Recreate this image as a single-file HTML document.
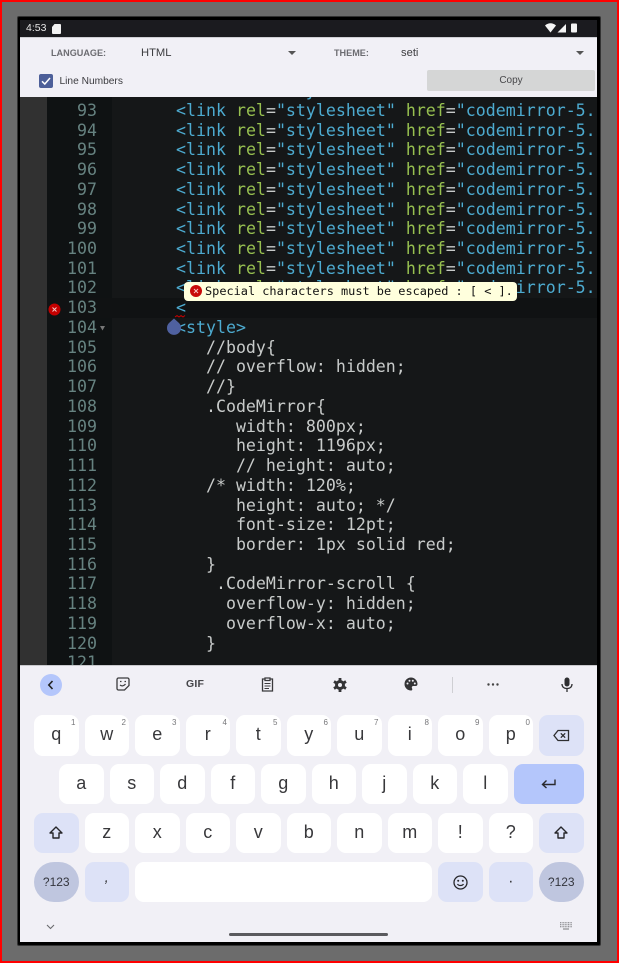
<!DOCTYPE html>
<html><head><meta charset="utf-8"><style>
*{margin:0;padding:0;box-sizing:border-box}
html,body{width:619px;height:963px;overflow:hidden;background:#6c6c6c;font-family:"Liberation Sans",sans-serif}
.a{position:absolute}
#red{left:0;top:0;width:619px;height:963px;border:2px solid #f00;z-index:9;pointer-events:none}
#dev{left:17px;top:16px;width:584px;height:930px;background:#000;border-radius:2px;border:1px solid #333}
#scr{left:20px;top:20px;width:577px;height:922px;background:#f1f0f6;overflow:hidden}
#st{left:0;top:0;width:577px;height:17px;background:#1b1b1f}
#tb{left:0;top:17px;width:577px;height:60px;background:#f1f0f6;border-top:1px solid #cfcfd4}
.g{color:#6c6c71;font-size:9.1px;font-weight:bold}
.v{color:#3c3c3f;font-size:11.2px}
#ed{left:0;top:77px;width:577px;height:568px;background:#151718;overflow:hidden}
#gl{left:0;top:0;width:27px;height:568px;background:#313131}
#gn{left:27px;top:0;width:65px;height:568px;background:#0f1213}
#al{left:27px;top:201px;width:550px;height:20px;background:#101213}
#c{left:156px;top:-15.9px;font:16.6px/19.74px "DejaVu Sans Mono",monospace;color:#c8cbca;white-space:pre}
#n{left:27px;top:-15.9px;width:50px;text-align:right;font:16.6px/19.74px "DejaVu Sans Mono",monospace;color:#668280;white-space:pre}
i{font-style:normal;color:#4dabd0}b{font-weight:normal;color:#97c050}
#tip{left:164px;top:185px;width:333px;height:19px;background:#ffd;border-radius:4px;font:11.9px/18px "DejaVu Sans Mono",monospace;color:#111;padding-left:21px;white-space:pre}
#kb{left:0;top:645px;width:577px;height:277px;background:#f1f0f6;border-top:1px solid #c9c9cd}
.k{position:absolute;background:#fff;border-radius:9px;width:44.5px;height:40.5px;text-align:center;font-size:18px;line-height:39px;color:#38383b}
.d{background:#dde2f7}
.p{background:#bfc6df;border-radius:20px;font-size:12px;line-height:40px;color:#33353d}
.k u{position:absolute;right:3px;top:3px;font-size:8px;line-height:9px;color:#77777a;text-decoration:none}
svg{position:absolute;overflow:visible}
</style></head><body>
<div class="a" id="dev"></div>
<div class="a" id="scr">
<div class="a" id="st">
<span class="a" style="left:6px;top:2px;font-size:10.5px;line-height:13px;color:#e6e6e6">4:53</span>
<svg style="left:32px;top:3.500px" width="9" height="10" viewBox="0 0 9 10"><path d="M2.500 0H8a1 1 0 0 1 1 1v8a1 1 0 0 1-1 1H1a1 1 0 0 1-1-1V3z" fill="#f2f2f2"/></svg>
<svg style="left:525px;top:3px" width="50" height="11" viewBox="0 0 50 11"><path d="M0 2.500C3-.5 8-.5 11 2.500L5.500 9.500z" fill="#f5f5f5"/><path d="M21 1V9.500H12.500z" fill="#f5f5f5"/><rect x="26" y="0.500" width="6" height="9" rx="1" fill="#f5f5f5"/></svg>
</div>
<div class="a" id="tb">
<span class="a g" style="left:31px;top:8.500px;line-height:12px">LANGUAGE:</span>
<span class="a v" style="left:121px;top:9px;line-height:13px">HTML</span>
<svg style="left:268px;top:12.500px" width="8" height="4"><path d="M0 0H8L4 4z" fill="#555"/></svg>
<span class="a g" style="left:314px;top:8.500px;line-height:12px">THEME:</span>
<span class="a v" style="left:381px;top:9px;line-height:13px">seti</span>
<svg style="left:556px;top:12.500px" width="8" height="4"><path d="M0 0H8L4 4z" fill="#555"/></svg>
<div class="a" style="left:19px;top:36px;width:14px;height:14px;border-radius:2px;background:#4d5f99"></div>
<svg style="left:19px;top:36px" width="14" height="14"><path d="M3 7.300L5.800 10 11 4" fill="none" stroke="#fff" stroke-width="1.500"/></svg>
<span class="a" style="left:39.500px;top:36.500px;font-size:10.200px;line-height:13px;color:#3c3c40">Line Numbers</span>
<div class="a" style="left:407px;top:32px;width:168px;height:21px;background:#d5d6d6;border-radius:2px;text-align:center;font-size:10px;line-height:21px;color:#48484b">Copy</div>
</div>
<div class="a" id="ed">
<div class="a" id="gl"></div><div class="a" id="gn"></div><div class="a" id="al"></div>
<div class="a" id="n">92
93
94
95
96
97
98
99
100
101
102
103
104
105
106
107
108
109
110
111
112
113
114
115
116
117
118
119
120
121</div>
<div class="a" id="c"><i>&lt;link</i> <b>rel</b>=<i>"stylesheet"</i> <b>href</b>=<i>"codemirror-5.</i>
<i>&lt;link</i> <b>rel</b>=<i>"stylesheet"</i> <b>href</b>=<i>"codemirror-5.</i>
<i>&lt;link</i> <b>rel</b>=<i>"stylesheet"</i> <b>href</b>=<i>"codemirror-5.</i>
<i>&lt;link</i> <b>rel</b>=<i>"stylesheet"</i> <b>href</b>=<i>"codemirror-5.</i>
<i>&lt;link</i> <b>rel</b>=<i>"stylesheet"</i> <b>href</b>=<i>"codemirror-5.</i>
<i>&lt;link</i> <b>rel</b>=<i>"stylesheet"</i> <b>href</b>=<i>"codemirror-5.</i>
<i>&lt;link</i> <b>rel</b>=<i>"stylesheet"</i> <b>href</b>=<i>"codemirror-5.</i>
<i>&lt;link</i> <b>rel</b>=<i>"stylesheet"</i> <b>href</b>=<i>"codemirror-5.</i>
<i>&lt;link</i> <b>rel</b>=<i>"stylesheet"</i> <b>href</b>=<i>"codemirror-5.</i>
<i>&lt;link</i> <b>rel</b>=<i>"stylesheet"</i> <b>href</b>=<i>"codemirror-5.</i>
<i>&lt;link</i> <b>rel</b>=<i>"stylesheet"</i> <b>href</b>=<i>"codemirror-5.</i>
<i>&lt;</i>
<i>&lt;style&gt;</i>
   //body{
   // overflow: hidden;
   //}
   .CodeMirror{
      width: 800px;
      height: 1196px;
      // height: auto;
   /* width: 120%;
      height: auto; */
      font-size: 12pt;
      border: 1px solid red;
   }
    .CodeMirror-scroll {
     overflow-y: hidden;
     overflow-x: auto;
   }
</div>
<svg style="left:155px;top:218px" width="11" height="3"><path d="M0 2L2 .5 4 2 6 .5 8 2 10 .5" fill="none" stroke="#c00" stroke-width=".9"/></svg>
<svg style="left:28px;top:206px" width="13" height="13"><circle cx="6.500" cy="6.500" r="6" fill="#c40000"/><path d="M4.500 4.500L8.500 8.500M8.500 4.500L4.500 8.500" stroke="#f3c6c6" stroke-width="1"/></svg>
<svg style="left:80px;top:229px" width="6" height="5"><path d="M0 0H5L2.500 4.500z" fill="#777"/></svg>
<svg style="left:146px;top:221px" width="16" height="17"><path d="M8 0.500L13 5A7 7 0 1 1 3 5z" fill="#4f61a0"/></svg>
<div class="a" id="tip">Special characters must be escaped : [ &lt; ].
<svg style="left:6px;top:3px" width="12" height="12"><circle cx="6" cy="6" r="6" fill="#c80a0a"/><path d="M4 4L8 8M8 4L4 8" stroke="#f5c4c4" stroke-width="1"/></svg></div>
</div>
<div class="a" id="kb">
<div class="a" style="left:20px;top:8px;width:22px;height:22px;border-radius:11px;background:#b4c6fb"></div>
<svg style="left:27px;top:14px" width="8" height="10"><path d="M5.500 1L1.800 5 5.500 9" fill="none" stroke="#222" stroke-width="1.600"/></svg>
<svg style="left:96px;top:11px" width="14" height="14" viewBox="0 0 14 14"><path d="M2.500 1H11.500A1.500 1.500 0 0 1 13 2.500V8.500L8.500 13H2.500A1.500 1.500 0 0 1 1 11.500V2.500A1.500 1.500 0 0 1 2.500 1z" fill="none" stroke="#3a3a3c" stroke-width="1.300"/><path d="M4 4.500H5.500M8.500 4.500H10M4 8C6 9.500 8 9 9.500 7" fill="none" stroke="#3a3a3c" stroke-width="1.200"/></svg>
<span class="a" style="left:166px;top:12px;font-size:10.500px;line-height:13px;font-weight:bold;color:#46464a;letter-spacing:.2px">GIF</span>
<svg style="left:241px;top:11px" width="13" height="15" viewBox="0 0 13 15"><path d="M4 2H1.500V14H11.500V2H9M4 1H9V3.500H4z" fill="none" stroke="#3a3a3c" stroke-width="1.300"/><path d="M3.500 6.500H9.500M3.500 9H9.500M3.500 11.500H8" stroke="#3a3a3c" stroke-width="1.100"/></svg>
<svg style="left:313px;top:12px" width="14" height="14" viewBox="0 0 14 14"><circle cx="7" cy="7" r="3.500" fill="none" stroke="#343436" stroke-width="3"/><path d="M7 0V3M7 11V14M1 3.500L3.500 5M10.500 9L13 10.500M1 10.500L3.500 9M10.500 5L13 3.500" stroke="#343436" stroke-width="2.800"/></svg>
<svg style="left:384px;top:11px" width="14" height="14" viewBox="0 0 14 14"><path d="M7 0.500A6.500 6.500 0 1 0 7 13.500C8.500 13.500 8.500 12 8 11.200 7.400 10 8.200 9 9.500 9H11.500C13 9 13.500 8 13.500 7 13.500 3.500 10.500 .5 7 .5z" fill="#343436"/><circle cx="3.500" cy="6.500" r="1" fill="#f1f0f6"/><circle cx="5.500" cy="3.700" r="1" fill="#f1f0f6"/><circle cx="8.800" cy="3.700" r="1" fill="#f1f0f6"/><circle cx="10.800" cy="6.500" r="1" fill="#f1f0f6"/></svg>
<div class="a" style="left:432px;top:11px;width:1px;height:16px;background:#cfcfd3"></div>
<svg style="left:467px;top:17px" width="12" height="3"><circle cx="1.500" cy="1.500" r="1.200" fill="#444"/><circle cx="6" cy="1.500" r="1.200" fill="#444"/><circle cx="10.500" cy="1.500" r="1.200" fill="#444"/></svg>
<svg style="left:541px;top:11px" width="12" height="15" viewBox="0 0 12 15"><rect x="3.500" y="0.500" width="5" height="9" rx="2.500" fill="#2e2e30"/><path d="M1 7C1 10 3 11.500 6 11.500S11 10 11 7M6 11.500V15" fill="none" stroke="#2e2e30" stroke-width="1.300"/></svg>

<div class="k" style="left:14px;top:49px">q<u>1</u></div>
<div class="k" style="left:64.500px;top:49px">w<u>2</u></div>
<div class="k" style="left:115px;top:49px">e<u>3</u></div>
<div class="k" style="left:165.500px;top:49px">r<u>4</u></div>
<div class="k" style="left:216px;top:49px">t<u>5</u></div>
<div class="k" style="left:266.500px;top:49px">y<u>6</u></div>
<div class="k" style="left:317px;top:49px">u<u>7</u></div>
<div class="k" style="left:367.500px;top:49px">i<u>8</u></div>
<div class="k" style="left:418px;top:49px">o<u>9</u></div>
<div class="k" style="left:468.500px;top:49px">p<u>0</u></div>
<div class="k d" style="left:519px;top:49px"></div>
<svg style="left:533px;top:63px" width="17" height="13" viewBox="0 0 17 13"><path d="M5 1.500H15.500V11.500H5L1 6.500z" fill="none" stroke="#2e2e30" stroke-width="1.300"/><path d="M7.800 4.300L12.200 8.700M12.200 4.300L7.800 8.700" stroke="#2e2e30" stroke-width="1.300"/></svg>

<div class="k" style="left:39px;top:97.500px">a</div>
<div class="k" style="left:89.500px;top:97.500px">s</div>
<div class="k" style="left:140px;top:97.500px">d</div>
<div class="k" style="left:190.500px;top:97.500px">f</div>
<div class="k" style="left:241px;top:97.500px">g</div>
<div class="k" style="left:291.500px;top:97.500px">h</div>
<div class="k" style="left:342px;top:97.500px">j</div>
<div class="k" style="left:392.500px;top:97.500px">k</div>
<div class="k" style="left:443px;top:97.500px">l</div>
<div class="k" style="left:493.500px;top:97.500px;width:70px;background:#b4c6fb"></div>
<svg style="left:521px;top:112px" width="15" height="11" viewBox="0 0 15 11"><path d="M14 1.500V6.500H2M5.500 2.500L1.500 6.500 5.500 10" fill="none" stroke="#2a2a2e" stroke-width="1.400"/></svg>

<div class="k d" style="left:14px;top:146.500px"></div>
<svg style="left:29px;top:159.500px" width="14" height="13" viewBox="0 0 14 13"><path d="M7 1L13 7H10V12H4V7H1z" fill="none" stroke="#26262a" stroke-width="1.400" stroke-linejoin="round"/></svg>
<div class="k" style="left:64.500px;top:146.500px">z</div>
<div class="k" style="left:115px;top:146.500px">x</div>
<div class="k" style="left:165.500px;top:146.500px">c</div>
<div class="k" style="left:216px;top:146.500px">v</div>
<div class="k" style="left:266.500px;top:146.500px">b</div>
<div class="k" style="left:317px;top:146.500px">n</div>
<div class="k" style="left:367.500px;top:146.500px">m</div>
<div class="k" style="left:418px;top:146.500px">!</div>
<div class="k" style="left:468.500px;top:146.500px">?</div>
<div class="k d" style="left:519px;top:146.500px"></div>
<svg style="left:534px;top:159.500px" width="14" height="13" viewBox="0 0 14 13"><path d="M7 1L13 7H10V12H4V7H1z" fill="none" stroke="#26262a" stroke-width="1.400" stroke-linejoin="round"/></svg>

<div class="k p" style="left:14px;top:195.500px">?123</div>
<div class="k d" style="left:64.500px;top:195.500px;font-size:15px;line-height:32px;font-style:italic">,</div>
<div class="k" style="left:115px;top:195.500px;width:297px"></div>
<div class="k d" style="left:418px;top:195.500px"></div>
<svg style="left:433px;top:208.500px" width="15" height="15" viewBox="0 0 15 15"><circle cx="7.500" cy="7.500" r="6.500" fill="none" stroke="#26262a" stroke-width="1.300"/><circle cx="5.200" cy="5.800" r="1" fill="#26262a"/><circle cx="9.800" cy="5.800" r="1" fill="#26262a"/><path d="M4.500 9C5.500 11 9.500 11 10.500 9" fill="none" stroke="#26262a" stroke-width="1.200"/></svg>
<div class="k d" style="left:468.500px;top:195.500px;font-size:16px;line-height:40px">·</div>
<div class="k p" style="left:519px;top:195.500px">?123</div>
<svg style="left:26px;top:258px" width="9" height="6"><path d="M1 1L4.500 4.500 8 1" fill="none" stroke="#6a6a6e" stroke-width="1.100"/></svg>
<div class="a" style="left:209px;top:267px;width:159px;height:3px;border-radius:2px;background:#5a5a5e"></div>
<svg style="left:540px;top:256px" width="12" height="8" viewBox="0 0 12 8"><path d="M0 .7H12M0 2.700H12M0 4.700H12" stroke="#77777b" stroke-width="1" stroke-dasharray="1 .6"/><path d="M3 7H9" stroke="#77777b" stroke-width="1"/></svg>
</div>
</div>
<div class="a" id="red"></div>
</body></html>
